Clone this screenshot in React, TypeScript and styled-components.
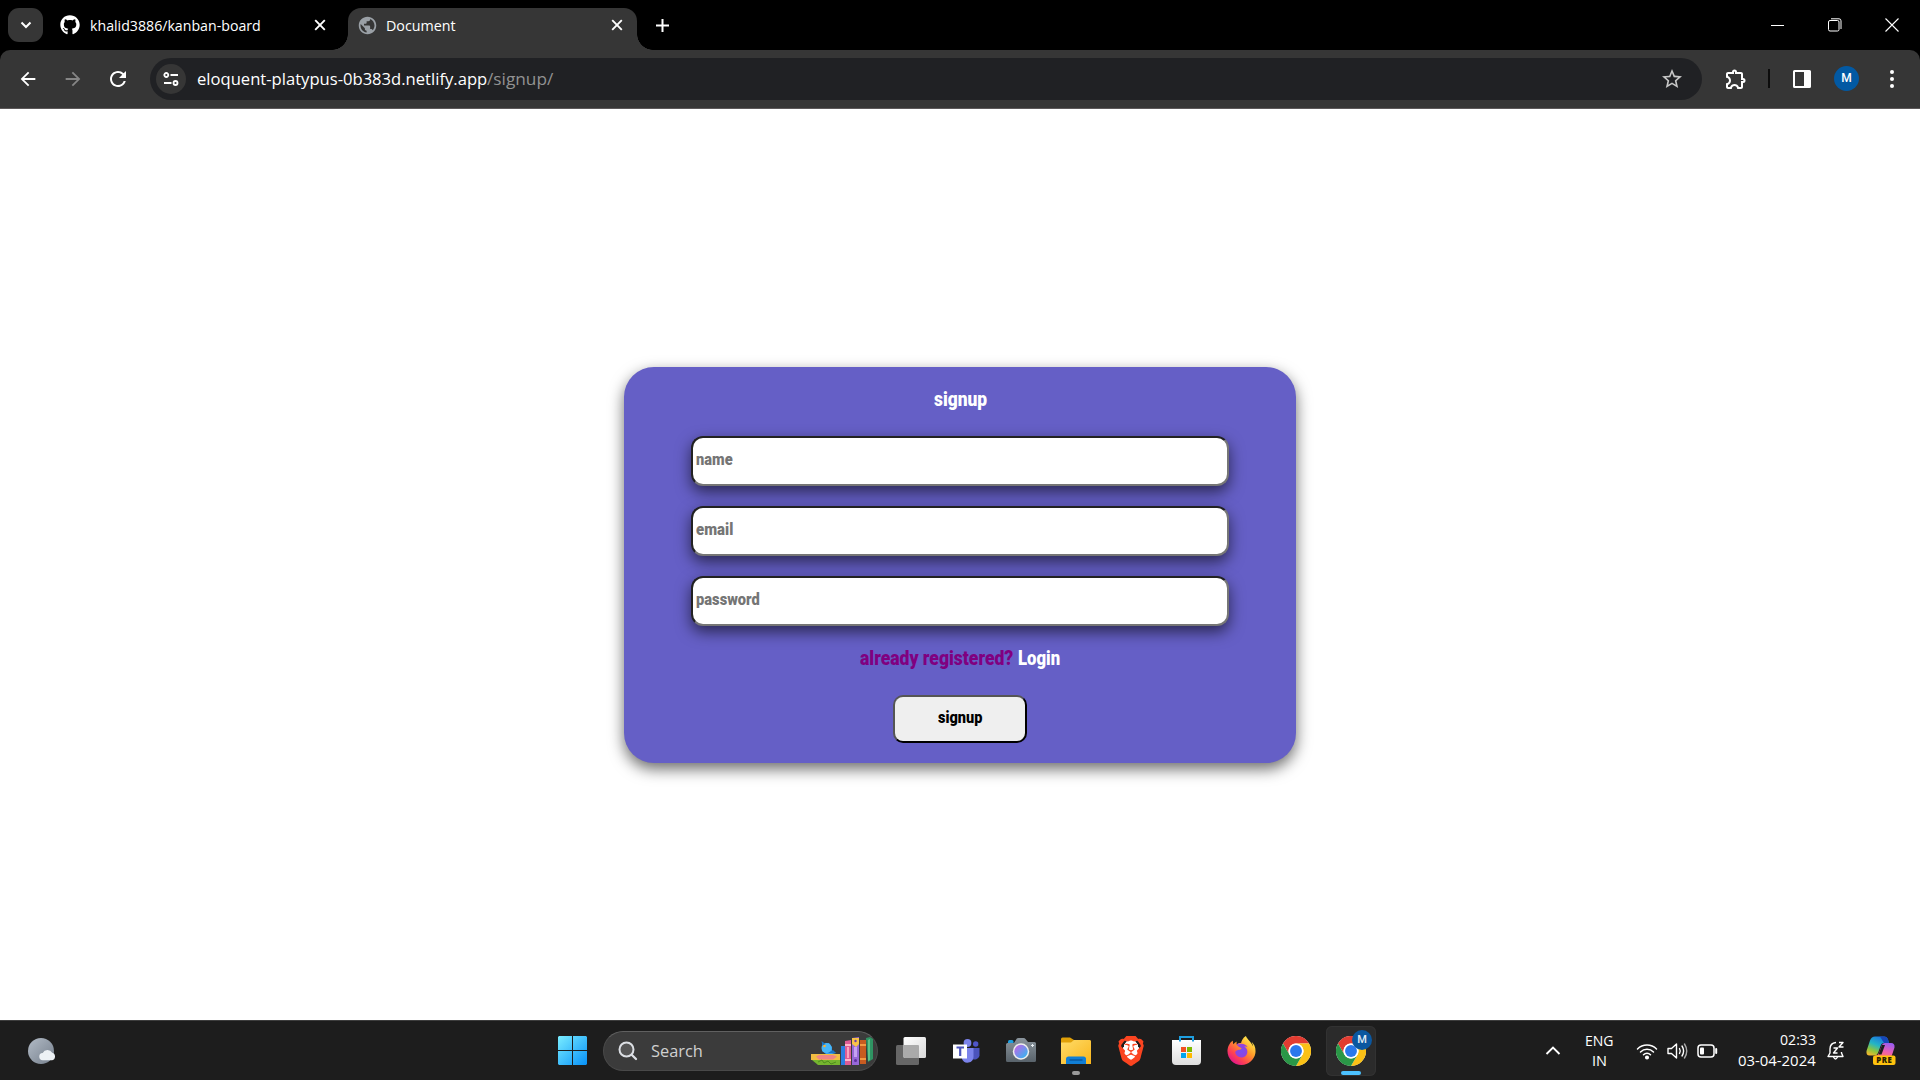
import React, { useLayoutEffect, useRef, useState } from 'react';
import styled, { createGlobalStyle, css } from 'styled-components';
import { FaGithub } from 'react-icons/fa';
import { MdArrowBack, MdArrowForward, MdRefresh, MdPublic, MdStarBorder, MdOutlineExtension } from 'react-icons/md';
import { SiBrave, SiFirefoxbrowser } from 'react-icons/si';

const GlobalStyle = createGlobalStyle`
  * { box-sizing: border-box; }
  html, body { margin: 0; background: #fff; overflow: hidden; }
  svg { display: block; flex: none; }
`;

const UI_FONT = '"Open Sans", "Noto Sans", sans-serif';
const DISPLAY_FONT = 'Roboto, "Open Sans", sans-serif';

/* ---------- condensed text ---------- */

const FitBox = styled.span<{ $w: number }>`
  display: block;
  flex: none;
  width: ${p => p.$w}px;
  white-space: pre;
`;
const FitInner = styled.span`
  display: inline-block;
  transform-origin: 0 50%;
`;

function Fit({ w, children }: { w: number; children: React.ReactNode }) {
  const ref = useRef<HTMLSpanElement>(null);
  const [k, setK] = useState(1);
  useLayoutEffect(() => {
    if (ref.current && ref.current.offsetWidth) setK(w / ref.current.offsetWidth);
  }, [w]);
  return (
    <FitBox $w={w}>
      <FitInner ref={ref} style={{ transform: `scaleX(${k})` }}>{children}</FitInner>
    </FitBox>
  );
}

/* ---------- browser window ---------- */

const Screen = styled.div`
  display: flex;
  flex-direction: column;
  width: 1920px;
  height: 1080px;
  background: #000;
  font-family: ${UI_FONT};
  color: #fff;
`;

const TabStrip = styled.header`
  display: flex;
  align-items: center;
  height: 50px;
  padding-left: 8px;
  background: #000;
`;
const TabSearch = styled.button`
  display: grid;
  place-items: center;
  width: 35px;
  height: 34px;
  padding: 0;
  border: 0;
  border-radius: 11px;
  background: #363636;
`;
const Tab = styled.div<{ $active?: boolean }>`
  display: flex;
  align-items: center;
  position: relative;
  font-size: 14.5px;
  line-height: 20px;
  width: 305px;
  height: 42px;
  padding: 0 20px 8px 17px;
  align-self: flex-end;
  ${p => p.$active && css`
    width: 289px;
    padding: 0 12px 8px 11px;
    background: #363636;
    border-radius: 13px 13px 0 0;
    &::before, &::after {
      content: '';
      position: absolute;
      bottom: 0;
      width: 16px;
      height: 16px;
    }
    &::before {
      left: -16px;
      background: radial-gradient(circle at 0 0, transparent 15.5px, #363636 16px);
    }
    &::after {
      right: -16px;
      background: radial-gradient(circle at 100% 0, transparent 15.5px, #363636 16px);
    }
  `}
`;
const TabLabel = styled.div`
  flex: 1;
  padding-left: 10px;
  margin-top: 1px;
`;
const NewTab = styled.div`
  padding-left: 18px;
`;
const WindowControls = styled.div`
  display: flex;
  margin-left: auto;
`;
const ControlSlot = styled.div`
  display: grid;
  place-items: center;
  width: 57px;
  height: 50px;
`;

const Toolbar = styled.nav`
  display: flex;
  align-items: center;
  height: 59px;
  padding: 0 5px 1px;
  background: #363636;
  border-bottom: 1px solid #5c5859;
  border-radius: 10px 10px 0 0;
`;
const ToolSlot = styled.div<{ $dim?: boolean }>`
  display: grid;
  place-items: center;
  width: 45px;
  height: 45px;
  color: ${p => (p.$dim ? '#868686' : '#fff')};
`;
const AddressBar = styled.div`
  display: flex;
  align-items: center;
  width: 1552px;
  height: 42px;
  margin: 0 11px 0 10px;
  padding: 0 18px 0 6px;
  border-radius: 21px;
  background: #202124;
  font-size: 17px;
  line-height: 24px;
`;
const SiteInfo = styled.div`
  display: grid;
  place-items: center;
  width: 30px;
  height: 30px;
  margin-right: 11px;
  border-radius: 50%;
  background: #363636;
`;
const Path = styled.div`
  flex: 1;
  color: #929292;
`;
const Divider = styled.div`
  width: 2px;
  height: 19px;
  margin: 0 9.5px;
  background: #0c0c0c;
`;
const Avatar = styled.div`
  display: grid;
  place-items: center;
  width: 25px;
  height: 25px;
  border-radius: 50%;
  background: #0259a3;
  font: 500 12px/25px Roboto, sans-serif;
`;

/* ---------- signup page ---------- */

const Page = styled.main`
  display: flex;
  justify-content: center;
  align-items: center;
  height: 911px;
  padding-bottom: 0;
  background: #fff;
  font-family: ${DISPLAY_FONT};
  font-weight: 900;
`;
const Card = styled.form`
  display: flex;
  flex-direction: column;
  align-items: center;
  width: 672px;
  height: 396px;
  margin-top: 1px;
  border-radius: 30px;
  background: #655fc6;
  box-shadow: 0 6px 15px rgba(0, 0, 0, 0.58);
`;
const Title = styled.div`
  margin-top: 20px;
  height: 49px;
  font-size: 20px;
  line-height: 25px;
`;
const Field = styled.div`
  display: flex;
  align-items: center;
  width: 538px;
  height: 50px;
  margin-bottom: 20px;
  padding: 0 3px 4px;
  border: 2px solid;
  border-color: #222 #767676 #767676 #222;
  border-radius: 12px;
  background: #fff;
  color: #757575;
  font-size: 17px;
  line-height: 22px;
  box-shadow: 0 6px 15px rgba(0, 0, 0, 0.58);
`;
const Prompt = styled.div`
  display: flex;
  gap: 5px;
  height: 49px;
  color: #800080;
  font-size: 19.5px;
  line-height: 25px;
`;
const LoginLink = styled.a`
  color: #fff;
`;
const Submit = styled.button`
  display: flex;
  align-items: center;
  justify-content: center;
  width: 134px;
  height: 48px;
  padding: 0 0 3px;
  border: 2px solid;
  border-color: #555 #000 #000 #555;
  border-radius: 10px;
  background: #efefef;
  color: #000;
  font: 900 16.5px/22px ${DISPLAY_FONT};
`;

/* ---------- taskbar ---------- */

const Taskbar = styled.footer`
  display: flex;
  align-items: center;
  height: 60px;
  border-top: 1px solid #3d3d3d;
  background: #1d1d1d;
`;
const Weather = styled.div`
  width: 558px;
  padding-left: 27px;
`;
const SearchBox = styled.div`
  display: flex;
  align-items: center;
  width: 275px;
  height: 40px;
  margin: 0 3px 0 16px;
  padding: 0 4px 0 14px;
  border: 1px solid #494949;
  border-top-color: #606060;
  border-radius: 20px;
  background: #3b3b3b;
  color: #d0d0d0;
  font-size: 17px;
  line-height: 24px;
`;
const SearchLabel = styled.div`
  flex: 1;
  padding-left: 13px;
`;
const AppSlot = styled.div<{ $active?: boolean }>`
  display: grid;
  place-items: center;
  position: relative;
  width: 50px;
  height: 50px;
  margin-left: ${p => (p.$active ? '5px' : '5px')};
  border-radius: 6px;
  background: ${p => (p.$active ? '#2b2b2b' : 'transparent')};
  box-shadow: ${p => (p.$active ? 'inset 0 0 0 1px #323232' : 'none')};
`;
const Indicator = styled.i<{ $wide?: boolean }>`
  position: absolute;
  bottom: 1px;
  left: ${p => (p.$wide ? '15px' : '21px')};
  width: ${p => (p.$wide ? '20px' : '8px')};
  height: 4px;
  border-radius: 2px;
  background: ${p => (p.$wide ? '#4cc2ff' : '#9a9a9a')};
`;
const ProfileBadge = styled.b`
  position: absolute;
  top: 4px;
  right: 4px;
  width: 20px;
  height: 20px;
  border-radius: 50%;
  background: #0a57a0;
  color: #e2ecf5;
  font: 500 11px/20px Roboto, sans-serif;
  text-align: center;
`;
const Tray = styled.div`
  display: flex;
  align-items: center;
  margin-left: auto;
  padding-right: 24px;
  font-size: 14.5px;
  line-height: 21px;
`;
const Language = styled.div`
  display: flex;
  flex-direction: column;
  align-items: center;
  margin: 0 22px 0 24px;
  line-height: 20px;
`;
const StatusIcons = styled.div`
  display: flex;
  align-items: center;
  gap: 9px;
  margin-right: 20px;
`;
const Clock = styled.div`
  display: flex;
  flex-direction: column;
  align-items: flex-end;
  margin: -2px 11px 0 0;
`;

/* ---------- drawings ---------- */

const Cross = () => (
  <svg width="16" height="16" viewBox="0 0 16 16" stroke="#fff" strokeWidth="1.9"><path d="M3.2 3.2l9.6 9.6M12.8 3.2l-9.6 9.6" /></svg>
);

const ChromeLogo = () => (
  <svg width="30" height="30" viewBox="0 0 48 48">
    <circle cx="24" cy="24" r="24" fill="#fff" />
    <path d="M3.2 12a24 24 0 0 1 41.6 0H24a12 12 0 0 0-10.4 18z" fill="#e23c31" />
    <path d="M44.8 12A24 24 0 0 1 24 48l10.4-18A12 12 0 0 0 24 12z" fill="#fbc116" />
    <path d="M24 48A24 24 0 0 1 3.2 12l10.4 18A12 12 0 0 0 34.4 30z" fill="#2a9747" />
    <circle cx="24" cy="24" r="12" fill="#fff" />
    <circle cx="24" cy="24" r="9.5" fill="#2a78ec" />
  </svg>
);

const WindowsLogo = () => (
  <svg width="29" height="29" viewBox="0 0 29 29">
    <defs><linearGradient id="win" gradientUnits="userSpaceOnUse" x1="0" y1="0" x2="29" y2="29"><stop stopColor="#7aedff" /><stop offset="1" stopColor="#0791f8" /></linearGradient></defs>
    <path fill="url(#win)" d="M1 0h13v14H0V1zM15 0h13l1 1v13H15zM0 15h14v14H1l-1-1zM15 15h14v13l-1 1H15z" />
  </svg>
);

const Books = () => (
  <svg width="62" height="30" viewBox="0 0 62 30">
    <path d="M0 18h29v6H0z" fill="#f2bd42" />
    <path d="M5 20.5l3-1.5h14l4 1.5-4 3H8z" fill="#ef8585" />
    <path d="M1 24h28v5H7z" fill="#75b52f" /><path d="M7 26l4-2 2 3 4-2 3 3 5-2" stroke="#4f8d1d" fill="none" />
    <path d="M11 6l3 2 4-1 3 4v4l4 2-4 1H15l-4-3z" fill="#389fec" /><circle cx="15.5" cy="12" r="5" fill="#48b6f7" />
    <path d="M10.500 5l4 3-3 2zM17 17l5-3 3 3z" fill="#1975c8" /><circle cx="13.500" cy="10" r="1.300" fill="#ffb02e" />
    <path d="M30 10h4v19h-4z" fill="#2b7de0" />
    <path d="M34 5l6-1v25h-6z" fill="#de5c94" /><path d="M34 8h6v2h-6zM34 23h6v2h-6z" fill="#ffb5c8" /><path d="M36 11h2v11h-2z" fill="#f9a3bd" />
    <path d="M41 2l7-1v28h-7z" fill="#9668d8" /><path d="M41 2h7v6l-3 3-4-3z" fill="#f8c348" /><path d="M43 11h3v10h-3z" fill="#c5a2f3" /><circle cx="44.500" cy="5" r="1.200" fill="#6e3cac" /><circle cx="44.500" cy="24.500" r="1.500" fill="#5d2fa0" />
    <path d="M49 4l6 0v24h-6z" fill="#c75c21" /><path d="M49 8h6v2h-6zM49 22h6v2h-6z" fill="#f39a43" />
    <path d="M55 2l4-1 3 2v20l-5 3z" fill="#2f9362" /><path d="M57 4l2-1v21l-2 1z" fill="#5bc189" />
  </svg>
);

const TaskView = () => (
  <svg width="30" height="28" viewBox="0 0 30 28">
    <defs><linearGradient id="tv" x2="1" y2="1"><stop stopColor="#fff" /><stop offset="1" stopColor="#d9d9d9" /></linearGradient></defs>
    <rect y="8" width="23" height="20" rx="1.500" fill="#666" />
    <rect x="7.500" width="22.500" height="21" rx="1.500" fill="url(#tv)" />
    <path d="M7.500 8H22q1 0 1 1v12H9q-1.500 0-1.500-1.500z" fill="#aaa" />
  </svg>
);

const Teams = () => (
  <svg width="27" height="24" viewBox="0 0 27 24">
    <circle cx="22.700" cy="5" r="2.700" fill="#4f55c8" />
    <path d="M17 9h9.500v7.500a5 5 0 0 1-8 3z" fill="#4b53bc" />
    <circle cx="14.500" cy="4" r="3.900" fill="#7b83eb" />
    <path d="M9 9h11.500v9a6 6 0 0 1-11.500 2z" fill="#7b83eb" />
    <path d="M0 5.500h14v14H0z" fill="#fff" />
    <path d="M3.500 8.500h7.500M7.200 8.500v8.500" stroke="#4b53bc" strokeWidth="2.200" />
  </svg>
);

const Camera = () => (
  <svg width="30" height="25" viewBox="0 0 30 25">
    <defs>
      <linearGradient id="cb" x2="0" y2="1"><stop stopColor="#8b959d" /><stop offset="1" stopColor="#59636b" /></linearGradient>
      <linearGradient id="cl" x2="1" y2="1"><stop offset=".15" stopColor="#b36de8" /><stop offset="1" stopColor="#28bdf0" /></linearGradient>
    </defs>
    <path d="M2 6V3.500Q2 2 3.500 2H6q1.500 0 1.500 1.500V6z" fill="#1d9fe0" />
    <path d="M1.500 5H8l2.500-4Q11 0 12.500 0h5Q19 0 19.500 1L22 4h6.500Q30 4 30 5.500v17q0 1.500-1.500 1.500h-27Q0 24 0 22.500v-16Q0 5 1.500 5z" fill="url(#cb)" />
    <circle cx="15" cy="13.500" r="8.200" fill="#eee" /><circle cx="15" cy="13.500" r="6.700" fill="url(#cl)" />
    <path d="M26.500 6v3M25 7.500h3" stroke="#e8eef2" />
  </svg>
);

const Folder = () => (
  <svg width="30" height="27" viewBox="0 0 30 27">
    <defs><linearGradient id="fd" x2="1" y2="1"><stop stopColor="#ffdc69" /><stop offset="1" stopColor="#f9b51b" /></linearGradient></defs>
    <path d="M0 2Q0 .5 1.500.5H9L13 3h15q2 0 2 2v5H0z" fill="#e0a008" />
    <path d="M0 5.500h10L13 3h15.500Q30 3 30 4.500V27H0z" fill="url(#fd)" />
    <path d="M5 27v-5q0-2.500 2.500-2.500h15q2.500 0 2.500 2.500v5z" fill="#117fd6" />
    <path d="M8.500 23h13" stroke="#0a4f94" strokeWidth="1.200" />
  </svg>
);

const BraveBox = styled.div`
  display: grid;
  place-items: center;
  width: 30px;
  height: 30px;
  background: radial-gradient(ellipse 8px 11px at 50% 48%, #fff 97%, transparent 100%);
`;

const Store = () => (
  <svg width="29" height="29" viewBox="0 0 29 29">
    <defs><linearGradient id="st" x2="0" y2="1"><stop stopColor="#fff" /><stop offset="1" stopColor="#dedede" /></linearGradient></defs>
    <path d="M0 4h29v21q0 4-4 4H4q-4 0-4-4z" fill="url(#st)" />
    <path d="M8 5.500V1h13v4.500" fill="none" stroke="#1e9fe0" strokeWidth="2" />
    <path d="M9 11h5v5H9z" fill="#f25022" /><path d="M15 11h5v5h-5z" fill="#7fba00" /><path d="M9 17h5v5H9z" fill="#00a4ef" /><path d="M15 17h5v5h-5z" fill="#ffb900" />
  </svg>
);

const Firefox = () => (
  <svg width="29" height="29" viewBox="0 0 24 24">
    <defs>
      <linearGradient id="ff" x1=".85" y1=".1" x2=".2" y2=".9"><stop stopColor="#ffef4f" /><stop offset=".4" stopColor="#ff9a28" /><stop offset=".75" stopColor="#ff4351" /><stop offset="1" stopColor="#e41a86" /></linearGradient>
      <radialGradient id="fg"><stop stopColor="#7a4df2" /><stop offset="1" stopColor="#9a3fd4" /></radialGradient>
    </defs>
    <circle cx="12" cy="12.500" r="7" fill="url(#fg)" />
    <SiFirefoxbrowser size={24} fill="url(#ff)" color="url(#ff)" />
  </svg>
);

const WeatherIcon = () => (
  <svg width="30" height="28" viewBox="0 0 30 28">
    <defs><linearGradient id="mo" x2="1" y2="1"><stop stopColor="#b2bbc6" /><stop offset="1" stopColor="#757f8c" /></linearGradient></defs>
    <circle cx="14" cy="14" r="13" fill="url(#mo)" />
    <path d="M16 23.200a3.600 3.600 0 0 1-.3-7.200 5.400 5.400 0 0 1 9.500-.3 3.900 3.900 0 0 1 0 7.500z" fill="#edf1f5" />
  </svg>
);

const Wifi = () => (
  <svg width="22" height="18" viewBox="0 0 22 18" fill="none" stroke="#fff" strokeWidth="1.500" strokeLinecap="round">
    <path d="M1.500 7a13.500 13.500 0 0 1 19 0M4.500 10a9.200 9.200 0 0 1 13 0M7.500 12.800a5 5 0 0 1 7 0" /><circle cx="11" cy="15.500" r="1.300" fill="#fff" />
  </svg>
);
const Volume = () => (
  <svg width="21" height="20" viewBox="0 0 21 20" fill="none" stroke="#fff" strokeWidth="1.400" strokeLinecap="round" strokeLinejoin="round">
    <path d="M1 7.500h3.500L9.500 3v14l-5-4.500H1z" /><path d="M12.500 7.500q1.500 2.500 0 5M15 5q3.200 5 0 10" /><path d="M17.500 3q4.500 7 0 14" stroke="#aaa" />
  </svg>
);
const Battery = () => (
  <svg width="21" height="14" viewBox="0 0 21 14" fill="none" stroke="#fff" strokeWidth="1.500">
    <rect x="1" y="1" width="16" height="12" rx="3" /><rect x="3" y="3.500" width="4" height="7" rx="1" fill="#fff" stroke="none" /><path d="M19.200 5v4" strokeWidth="2" strokeLinecap="round" />
  </svg>
);
const Bell = () => (
  <svg width="18" height="19" viewBox="0 0 18 19" fill="none" stroke="#fff" strokeWidth="1.400" strokeLinejoin="round">
    <path d="M9 1.500Q3 2 3 8v4L1 15.500h15L14.500 12v-1" /><path d="M6.500 16q2 4 4 0" /><path d="M6.500 7h4l-4 5h4M12 1.500h4l-4 4.500h4.500" />
  </svg>
);
const Copilot = () => (
  <svg width="30" height="29" viewBox="0 0 30 29">
    <defs>
      <linearGradient id="ca" x1=".7" y1="0" x2=".2" y2="1"><stop stopColor="#1b6fe0" /><stop offset=".45" stopColor="#23b5c5" /><stop offset=".75" stopColor="#8cc63f" /><stop offset="1" stopColor="#f2b72c" /></linearGradient>
      <linearGradient id="cc" x1=".7" y1="0" x2=".3" y2="1"><stop stopColor="#9a5cf0" /><stop offset=".55" stopColor="#ed5fb0" /><stop offset="1" stopColor="#ff7a5c" /></linearGradient>
    </defs>
    <path d="M9 .5h9q3 0 4 3l1 3.500h-5q-2.500 0-3.500 3l-2.500 7q-1 2.500-4 2.500H3.500Q0 19.500.5 15L4 4.500Q5.500.5 9 .5z" fill="url(#ca)" />
    <path d="M14 .5h4q3 0 4 3l1 3.500h-5z" fill="#1747b8" />
    <path d="M19 7h6q4 0 3.500 4.500L26 19q-1 3-4 3h-9q-3 0-4-2.500h0q3 0 4-2.500l2.500-7Q16.500 7 19 7z" fill="url(#cc)" />
    <path d="M16 9l3 0-3.500 9.500h-3z" fill="#1d1d1d" />
    <rect x="7" y="19.500" width="22.500" height="9.500" rx="2" fill="#ffc20e" />
    <text x="18.300" y="27.100" textAnchor="middle" fontFamily="Open Sans" fontWeight="800" fontSize="7.800" letterSpacing=".5" fill="#2a1f00">PRE</text>
  </svg>
);

export default function App() {
  return (
    <Screen>
      <GlobalStyle />
      <TabStrip>
        <TabSearch>
          <svg width="12" height="8" viewBox="0 0 12 8" fill="none" stroke="#fff" strokeWidth="2"><path d="M1.500 1.500L6 6l4.500-4.500" /></svg>
        </TabSearch>
        <Tab>
          <FaGithub size={20} />
          <TabLabel><Fit w={171}>khalid3886/kanban-board</Fit></TabLabel>
          <Cross />
        </Tab>
        <Tab $active>
          <MdPublic size={21} color="#9aa0a6" style={{ margin: '0 -2px' }} />
          <TabLabel><Fit w={70}>Document</Fit></TabLabel>
          <Cross />
        </Tab>
        <NewTab>
          <svg width="15" height="15" viewBox="0 0 15 15" stroke="#fff" strokeWidth="2"><path d="M7.500 1v13M1 7.500h13" /></svg>
        </NewTab>
        <WindowControls>
          <ControlSlot><svg width="13" height="3" viewBox="0 0 13 3"><path d="M0 1h13v1H0z" fill="#fff" /></svg></ControlSlot>
          <ControlSlot>
            <svg width="14" height="14" viewBox="0 0 14 14" fill="none" stroke="#fff"><rect x=".5" y="2.500" width="10.500" height="10.500" rx="1.500" /><path d="M3 .8h8q2 0 2 2V11" /></svg>
          </ControlSlot>
          <ControlSlot><svg width="14" height="14" viewBox="0 0 14 14" stroke="#fff" strokeWidth="1.100"><path d="M.5.5l13 13M13.500.5l-13 13" /></svg></ControlSlot>
        </WindowControls>
      </TabStrip>

      <Toolbar>
        <ToolSlot><MdArrowBack size={22} /></ToolSlot>
        <ToolSlot $dim><MdArrowForward size={22} /></ToolSlot>
        <ToolSlot><MdRefresh size={24} /></ToolSlot>
        <AddressBar>
          <SiteInfo>
            <svg width="16" height="14" viewBox="0 0 16 14" fill="none" stroke="#fff" strokeWidth="1.800">
              <circle cx="3.300" cy="3" r="2" /><path d="M7.500 3H15M1 11h7.500" /><circle cx="12.500" cy="11" r="2" />
            </svg>
          </SiteInfo>
          <Fit w={290}>eloquent-platypus-0b383d.netlify.app</Fit>
          <Path><Fit w={66}>/signup/</Fit></Path>
          <MdStarBorder size={24} color="#c7c7c7" />
        </AddressBar>
        <ToolSlot><MdOutlineExtension size={24} /></ToolSlot>
        <Divider />
        <ToolSlot>
          <svg width="18" height="18" viewBox="0 0 18 18"><path fill="#fff" fillRule="evenodd" d="M1.500 0h15Q18 0 18 1.500v15q0 1.500-1.500 1.500h-15Q0 18 0 16.500v-15Q0 0 1.500 0zM2 2v14h9V2z" /></svg>
        </ToolSlot>
        <ToolSlot><Avatar>M</Avatar></ToolSlot>
        <ToolSlot>
          <svg width="4" height="18" viewBox="0 0 4 18" fill="#fff"><circle cx="2" cy="2" r="2" /><circle cx="2" cy="9" r="2" /><circle cx="2" cy="16" r="2" /></svg>
        </ToolSlot>
      </Toolbar>

      <Page>
        <Card>
          <Title><Fit w={53}>signup</Fit></Title>
          <Field><Fit w={37}>name</Fit></Field>
          <Field><Fit w={37}>email</Fit></Field>
          <Field><Fit w={64}>password</Fit></Field>
          <Prompt>
            <Fit w={153}>already registered?</Fit>
            <LoginLink><Fit w={42}>Login</Fit></LoginLink>
          </Prompt>
          <Submit type="button"><Fit w={44}>signup</Fit></Submit>
        </Card>
      </Page>

      <Taskbar>
        <Weather><WeatherIcon /></Weather>
        <WindowsLogo />
        <SearchBox>
          <svg width="20" height="20" viewBox="0 0 20 20" fill="none" stroke="#dcdfe4" strokeWidth="2" strokeLinecap="round"><circle cx="8.500" cy="8.500" r="7" fill="#555" /><path d="M13.700 13.700L18 18" strokeWidth="2.300" /></svg>
          <SearchLabel><Fit w={52}>Search</Fit></SearchLabel>
          <Books />
        </SearchBox>
        <AppSlot><TaskView /></AppSlot>
        <AppSlot><Teams /></AppSlot>
        <AppSlot><Camera /></AppSlot>
        <AppSlot><Folder /><Indicator /></AppSlot>
        <AppSlot><BraveBox><SiBrave size={30} color="#fb4420" /></BraveBox></AppSlot>
        <AppSlot><Store /></AppSlot>
        <AppSlot><Firefox /></AppSlot>
        <AppSlot><ChromeLogo /></AppSlot>
        <AppSlot $active><ChromeLogo /><ProfileBadge>M</ProfileBadge><Indicator $wide /></AppSlot>
        <Tray>
          <svg width="16" height="10" viewBox="0 0 16 10" fill="none" stroke="#fff" strokeWidth="1.900"><path d="M1.500 8L8 1.500 14.500 8" /></svg>
          <Language><Fit w={29}>ENG</Fit><Fit w={15}>IN</Fit></Language>
          <StatusIcons><Wifi /><Volume /><Battery /></StatusIcons>
          <Clock><Fit w={36}>02:33</Fit><Fit w={78}>03-04-2024</Fit></Clock>
          <Bell />
          <CopilotBox><Copilot /></CopilotBox>
        </Tray>
      </Taskbar>
    </Screen>
  );
}

const CopilotBox = styled.div`
  margin-left: 21px;
`;
